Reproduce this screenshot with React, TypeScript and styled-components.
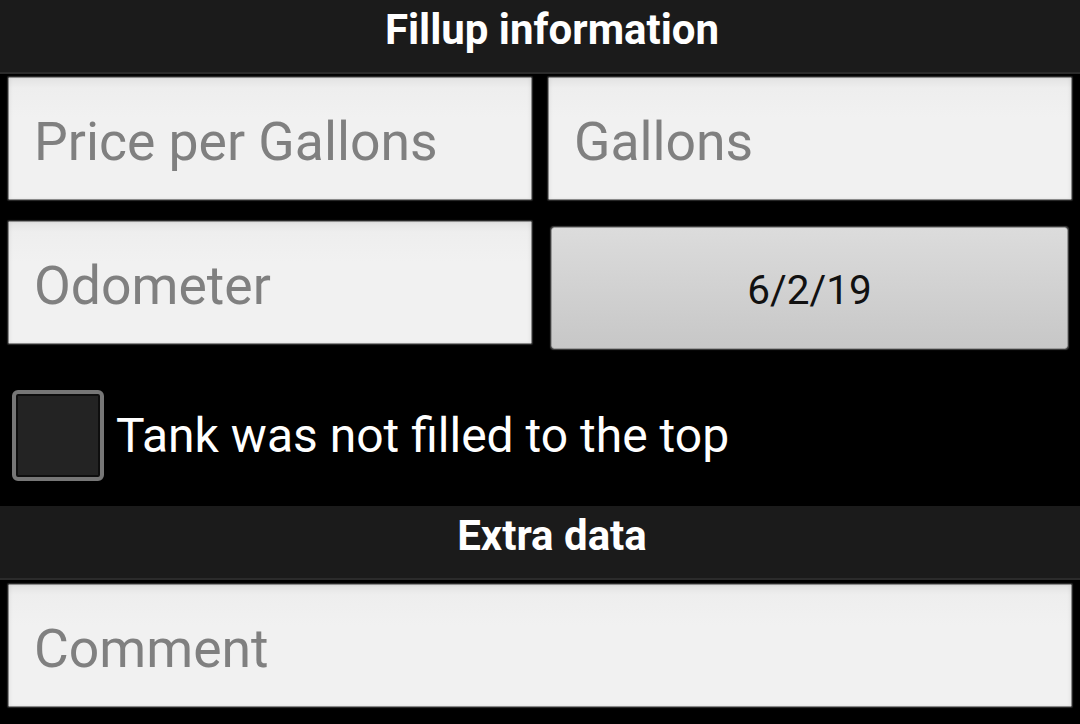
import React from "react";
import styled, { createGlobalStyle } from "styled-components";

const Global = createGlobalStyle`
  html, body {
    margin: 0;
    padding: 0;
    background: #000;
  }
  body {
    font-family: Roboto, "Noto Sans", "Liberation Sans", sans-serif;
    width: 1080px;
    height: 724px;
    overflow: hidden;
  }
  * { box-sizing: border-box; }
`;

const Screen = styled.div`
  width: 1080px;
  height: 724px;
  background: #000;
  display: flex;
  flex-direction: column;
`;

const SectionHeader = styled.div`
  height: 74px;
  background: #1b1b1b;
  border-bottom: 2px solid #2b2b2b;
  display: flex;
  align-items: center;
  justify-content: center;
  color: #fff;
  font-family: Roboto, "Liberation Sans", sans-serif;
  font-weight: 700;
  font-size: 42px;
  padding: 0 0 13px 24px;
`;

const Grid = styled.div`
  display: grid;
  grid-template-columns: 1fr 1fr;
  column-gap: 16px;
  row-gap: 21px;
  padding: 3px 8px 0 8px;
`;

const Field = styled.input`
  display: block;
  width: 100%;
  height: 123px;
  margin: 0;
  padding: 5px 0 0 25px;
  border: 1px solid #8c8c8c;
  border-radius: 1px;
  background: linear-gradient(#e3e3e3 0px, #eeeeee 10px, #f1f1f1 40px, #f1f1f1 100%);
  box-shadow: inset 2px 0 3px rgba(0, 0, 0, 0.04), inset -2px 0 3px rgba(0, 0, 0, 0.04),
    0 0 1px 1px rgba(90, 90, 90, 0.5);
  font-family: Roboto, "Liberation Sans", sans-serif;
  font-size: 53.5px;
  color: #222;
  outline: none;
  &::placeholder {
    color: #808080;
    opacity: 1;
  }
`;

const DateButton = styled.button`
  display: flex;
  align-items: center;
  justify-content: center;
  height: 122px;
  margin: 6px 4px 0 3px;
  padding: 4px 0 0 0;
  border: 1px solid #9a9a9a;
  border-radius: 3px;
  background: linear-gradient(#dcdcdc, #c7c7c7);
  box-shadow: 0 0 1px 1px rgba(110, 110, 110, 0.6);
  font-family: Roboto, "Liberation Sans", sans-serif;
  font-size: 40.5px;
  color: #111;
`;

const CheckRow = styled.label`
  display: flex;
  align-items: flex-start;
  gap: 12px;
  padding: 41px 0 0 12px;
  height: 157px;
`;

const Box = styled.span`
  width: 92px;
  height: 91px;
  border: 4px solid #767676;
  border-radius: 6px;
  background: #232323;
  box-shadow: inset 0 0 0 2px #0e0e0e;
  flex: none;
`;

const CheckText = styled.span`
  color: #fff;
  font-family: Roboto, "Liberation Sans", sans-serif;
  font-size: 48px;
  line-height: 91px;
  padding-bottom: 4px;
`;

const FullRow = styled.div`
  padding: 4px 8px 0 8px;
`;

export default function App() {
  return (
    <>
      <Global />
      <Screen>
        <SectionHeader>Fillup information</SectionHeader>
        <Grid>
          <Field placeholder="Price per Gallons" />
          <Field placeholder="Gallons" />
          <Field placeholder="Odometer" />
          <DateButton>6/2/19</DateButton>
        </Grid>
        <CheckRow>
          <Box />
          <CheckText>Tank was not filled to the top</CheckText>
        </CheckRow>
        <SectionHeader>Extra data</SectionHeader>
        <FullRow>
          <Field placeholder="Comment" />
        </FullRow>
      </Screen>
    </>
  );
}
